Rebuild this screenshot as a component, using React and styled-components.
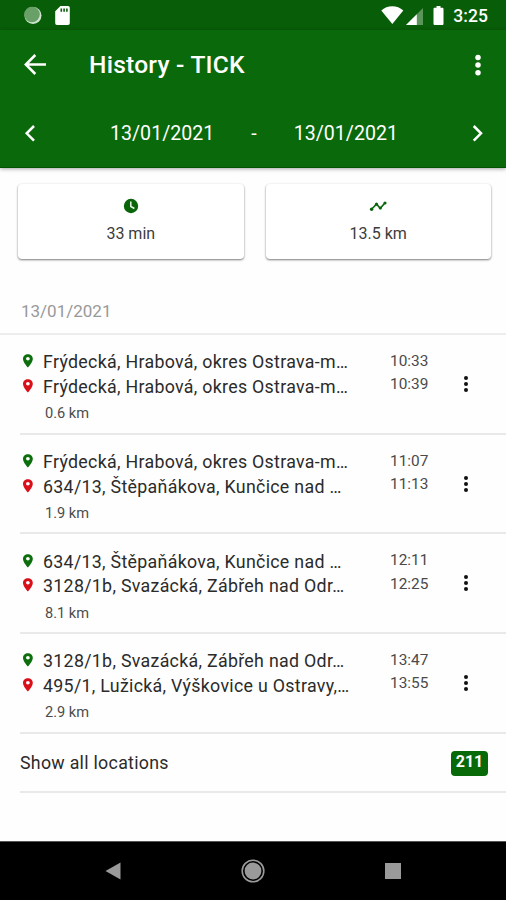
import React from 'react';
import styled, { createGlobalStyle } from 'styled-components';

const GlobalStyle = createGlobalStyle`
  * { box-sizing: border-box; }
  body { margin: 0; background: #fff; }
`;

const Screen = styled.div`
  width: 506px;
  height: 900px;
  display: flex;
  flex-direction: column;
  overflow: hidden;
  background: #fefefe;
  color: #2b2b2b;
  font-family: Roboto, sans-serif;
`;

const StatusBar = styled.div`
  flex: none;
  height: 30px;
  padding: 1px 18px 0 22px;
  display: flex;
  align-items: center;
  justify-content: space-between;
  background: #085d08;
  color: #fff;
`;

const StatusGroup = styled.div`
  display: flex;
  align-items: center;
`;

const Clock = styled.span`
  margin-left: 8px;
  font-size: 17.5px;
  font-weight: 500;
  line-height: 20px;
  letter-spacing: 0.1px;
`;

const Header = styled.header`
  flex: none;
  height: 138px;
  background: #0a690a;
  color: #fff;
  border-bottom: 1px solid #005400;
  box-shadow: 0 1px 4px rgba(0, 0, 0, 0.35);
`;

const Toolbar = styled.div`
  height: 69px;
  padding: 0 13px 0 20px;
  display: flex;
  align-items: center;
`;

const Title = styled.h1`
  flex: 1;
  margin: 0 0 0 39px;
  font-size: 24.6px;
  font-weight: 500;
  line-height: 30px;
  letter-spacing: 0.22px;
`;

const DateRange = styled.div`
  height: 68px;
  padding: 0 16px 0 18px;
  display: grid;
  grid-template-columns: 24px 1fr 24px;
  align-items: center;
`;

const Dates = styled.div`
  padding-top: 2px;
  display: flex;
  justify-content: center;
  gap: 37px;
  font-size: 19.6px;
  line-height: 24px;
`;

const Summary = styled.section`
  flex: none;
  height: 92px;
  padding: 16px 15px 0 18px;
  display: grid;
  grid-template-columns: 1fr 1fr;
  gap: 22px;
`;

const Card = styled.div`
  height: 75px;
  padding-top: 13px;
  display: flex;
  flex-direction: column;
  align-items: center;
  gap: 9px;
  border-radius: 4px;
  background: #fff;
  box-shadow: 0 1px 2px rgba(0, 0, 0, 0.42), 0 1px 3px rgba(0, 0, 0, 0.14);
`;

const CardValue = styled.span`
  font-size: 16px;
  line-height: 20px;
  color: #3c3c3c;
`;

const DayHeading = styled.h2`
  flex: none;
  height: 75px;
  margin: 0;
  padding: 40px 0 0 21px;
  border-bottom: 2px solid #ededed;
  font-size: 17px;
  font-weight: 400;
  line-height: 22px;
  color: #999;
`;

const TripList = styled.ul`
  margin: 0;
  padding: 0 0 0 20px;
  list-style: none;
`;

const Trip = styled.li`
  height: 99.7px;
  padding-top: 15px;
  display: grid;
  grid-template-columns: 343px 86px 1fr;
  border-bottom: 2px solid #e9e9e9;
`;

const Place = styled.div`
  height: 24.6px;
  display: flex;
  align-items: center;
  gap: 8px;
  font-size: 17.8px;
  line-height: 24px;
  letter-spacing: 0.3px;
  white-space: nowrap;
`;

const Distance = styled.div`
  margin: 4px 0 0 25px;
  font-size: 14.6px;
  line-height: 20px;
  color: #4c4c4c;
`;

const Times = styled.div`
  padding-left: 27px;
  font-size: 15.4px;
  line-height: 23.4px;
  color: #4a4a4a;
`;

const MenuCell = styled.div`
  padding: 22px 0 0 5px;
`;

const LocationsRow = styled.div`
  height: 59.2px;
  margin-left: 20px;
  padding: 2px 18px 0 0;
  display: flex;
  align-items: center;
  justify-content: space-between;
  border-bottom: 2px solid #e9e9e9;
  font-size: 17.8px;
  line-height: 24px;
  letter-spacing: 0.28px;
`;

const Badge = styled.span`
  width: 37px;
  height: 25px;
  padding-top: 1px;
  border-radius: 4px;
  background: #086908;
  color: #fff;
  font-size: 16px;
  font-weight: 700;
  line-height: 20px;
  letter-spacing: 0;
  text-align: center;
`;

const NavBar = styled.nav`
  flex: none;
  height: 59px;
  margin-top: auto;
  padding: 0 104px 0 104px;
  display: flex;
  align-items: center;
  justify-content: space-between;
  border-top: 1px solid #555;
  background: #000;
`;

const Icon = styled.svg`
  display: block;
  flex: none;
`;

const PIN_PATH =
  'M7 0C3.100 0 0 3.100 0 7c0 5.200 7 13 7 13s7-7.800 7-13c0-3.900-3.100-7-7-7zm0 9.500a2.700 2.700 0 1 1 0-5.400 2.700 2.700 0 0 1 0 5.400z';

const Pin = ({ color }) => (
  <Icon width="15" height="24" viewBox="0 0 15 24">
    <path transform="translate(3 4.300) scale(.7 .66)" d={PIN_PATH} fill={color} />
  </Icon>
);

const Dots = ({ size, radius, color }) => (
  <Icon width={size} height={size} viewBox="0 0 24 24" fill={color}>
    <circle cx="12" cy="5.900" r={radius} />
    <circle cx="12" cy="12" r={radius} />
    <circle cx="12" cy="18.100" r={radius} />
  </Icon>
);

const Chevron = ({ d }) => (
  <Icon width="24" height="24" viewBox="0 0 24 24" fill="none" stroke="#fff" strokeWidth="2.500">
    <path d={d} />
  </Icon>
);

const trips = [
  {
    from: 'Frýdecká, Hrabová, okres Ostrava-m…',
    to: 'Frýdecká, Hrabová, okres Ostrava-m…',
    start: '10:33',
    end: '10:39',
    distance: '0.6 km',
  },
  {
    from: 'Frýdecká, Hrabová, okres Ostrava-m…',
    to: '634/13, Štěpaňákova, Kunčice nad …',
    start: '11:07',
    end: '11:13',
    distance: '1.9 km',
  },
  {
    from: '634/13, Štěpaňákova, Kunčice nad …',
    to: '3128/1b, Svazácká, Zábřeh nad Odr…',
    start: '12:11',
    end: '12:25',
    distance: '8.1 km',
  },
  {
    from: '3128/1b, Svazácká, Zábřeh nad Odr…',
    to: '495/1, Lužická, Výškovice u Ostravy,…',
    start: '13:47',
    end: '13:55',
    distance: '2.9 km',
  },
];

export default function App() {
  return (
    <Screen>
      <GlobalStyle />
      <StatusBar>
        <StatusGroup>
          <Icon width="52" height="22" viewBox="0 0 52 22">
            <circle cx="11" cy="10.500" r="8.500" fill="#cfe5cf" />
            <circle cx="10" cy="9.500" r="7.800" fill="#68a068" />
            <path
              d="M38.500 1H46a1.800 1.800 0 0 1 1.800 1.800v15.400A1.800 1.800 0 0 1 46 20H35a1.800 1.800 0 0 1-1.800-1.800V6.300z"
              fill="#fff"
            />
            <path d="M38.500 3.500h1.600v3.300h-1.600zM41.300 3.500h1.600v3.300h-1.600zM44.100 3.500h1.600v3.300h-1.600z" fill="#085d08" />
          </Icon>
        </StatusGroup>
        <StatusGroup>
          <Icon width="64" height="22" viewBox="0 0 64 22">
            <path d="M.3 5.500C6-.3 16.500-.3 22.300 5.500L11.300 19z" fill="#fff" />
            <path d="M25 20L42 3v17z" fill="#5a965a" />
            <path d="M25 20L35.800 9.200V20z" fill="#fff" />
            <path
              d="M55.500 1h4v1.800h1.700c.8 0 1.300.5 1.300 1.300v14.600c0 .8-.5 1.300-1.300 1.300h-7.400c-.8 0-1.300-.5-1.300-1.300V4.100c0-.8.5-1.300 1.300-1.300h1.700z"
              fill="#fff"
            />
          </Icon>
          <Clock>3:25</Clock>
        </StatusGroup>
      </StatusBar>

      <Header>
        <Toolbar>
          <Icon width="30" height="30" viewBox="0 0 30 30" fill="none" stroke="#fff" strokeWidth="2.500">
            <path d="M26 14.500H6M15.300 5L5.800 14.500l9.500 9.500" />
          </Icon>
          <Title>History - TICK</Title>
          <Dots size={30} radius={2.2} color="#fff" />
        </Toolbar>
        <DateRange>
          <Chevron d="M16 5L8.700 12.300l7.300 7.300" />
          <Dates>
            <span>13/01/2021</span>
            <span>-</span>
            <span>13/01/2021</span>
          </Dates>
          <Chevron d="M7.700 5l7.300 7.300-7.300 7.300" />
        </DateRange>
      </Header>

      <Summary>
        <Card>
          <Icon width="20" height="18" viewBox="0 0 20 18">
            <circle cx="10" cy="9" r="7.200" fill="#0a650a" />
            <path d="M9.800 4.500v5l3.600 2" fill="none" stroke="#e8f3e8" strokeWidth="1.500" />
          </Icon>
          <CardValue>33 min</CardValue>
        </Card>
        <Card>
          <Icon width="20" height="18" viewBox="0 0 20 18" fill="#0a650a">
            <path d="M3.500 12.200l5-5 3.800 4 4.800-5.500" fill="none" stroke="#0a650a" strokeWidth="1.600" />
            <circle cx="3.600" cy="12.200" r="1.700" />
            <circle cx="8.500" cy="7.200" r="1.600" />
            <circle cx="12.300" cy="11" r="1.600" />
            <circle cx="17" cy="6" r="1.600" />
          </Icon>
          <CardValue>13.5 km</CardValue>
        </Card>
      </Summary>

      <DayHeading>13/01/2021</DayHeading>
      <TripList>
        {trips.map((trip) => (
          <Trip key={trip.start}>
            <div>
              <Place>
                <Pin color="#0c6e0c" />
                {trip.from}
              </Place>
              <Place>
                <Pin color="#d9101a" />
                {trip.to}
              </Place>
              <Distance>{trip.distance}</Distance>
            </div>
            <Times>
              <div>{trip.start}</div>
              <div>{trip.end}</div>
            </Times>
            <MenuCell>
              <Dots size={24} radius={2} color="#111" />
            </MenuCell>
          </Trip>
        ))}
      </TripList>
      <LocationsRow>
        Show all locations
        <Badge>211</Badge>
      </LocationsRow>

      <NavBar>
        <Icon width="18" height="20" viewBox="0 0 18 20">
          <path d="M1.500 10L16.500 1.500v17z" fill="#9a9a9a" />
        </Icon>
        <Icon width="26" height="26" viewBox="0 0 26 26">
          <circle cx="13" cy="13" r="10.800" fill="none" stroke="#9a9a9a" strokeWidth="1.600" />
          <circle cx="13" cy="13" r="8.400" fill="#9a9a9a" />
        </Icon>
        <Icon width="18" height="18" viewBox="0 0 18 18">
          <path d="M1 1h16v16H1z" fill="#9a9a9a" />
        </Icon>
      </NavBar>
    </Screen>
  );
}
